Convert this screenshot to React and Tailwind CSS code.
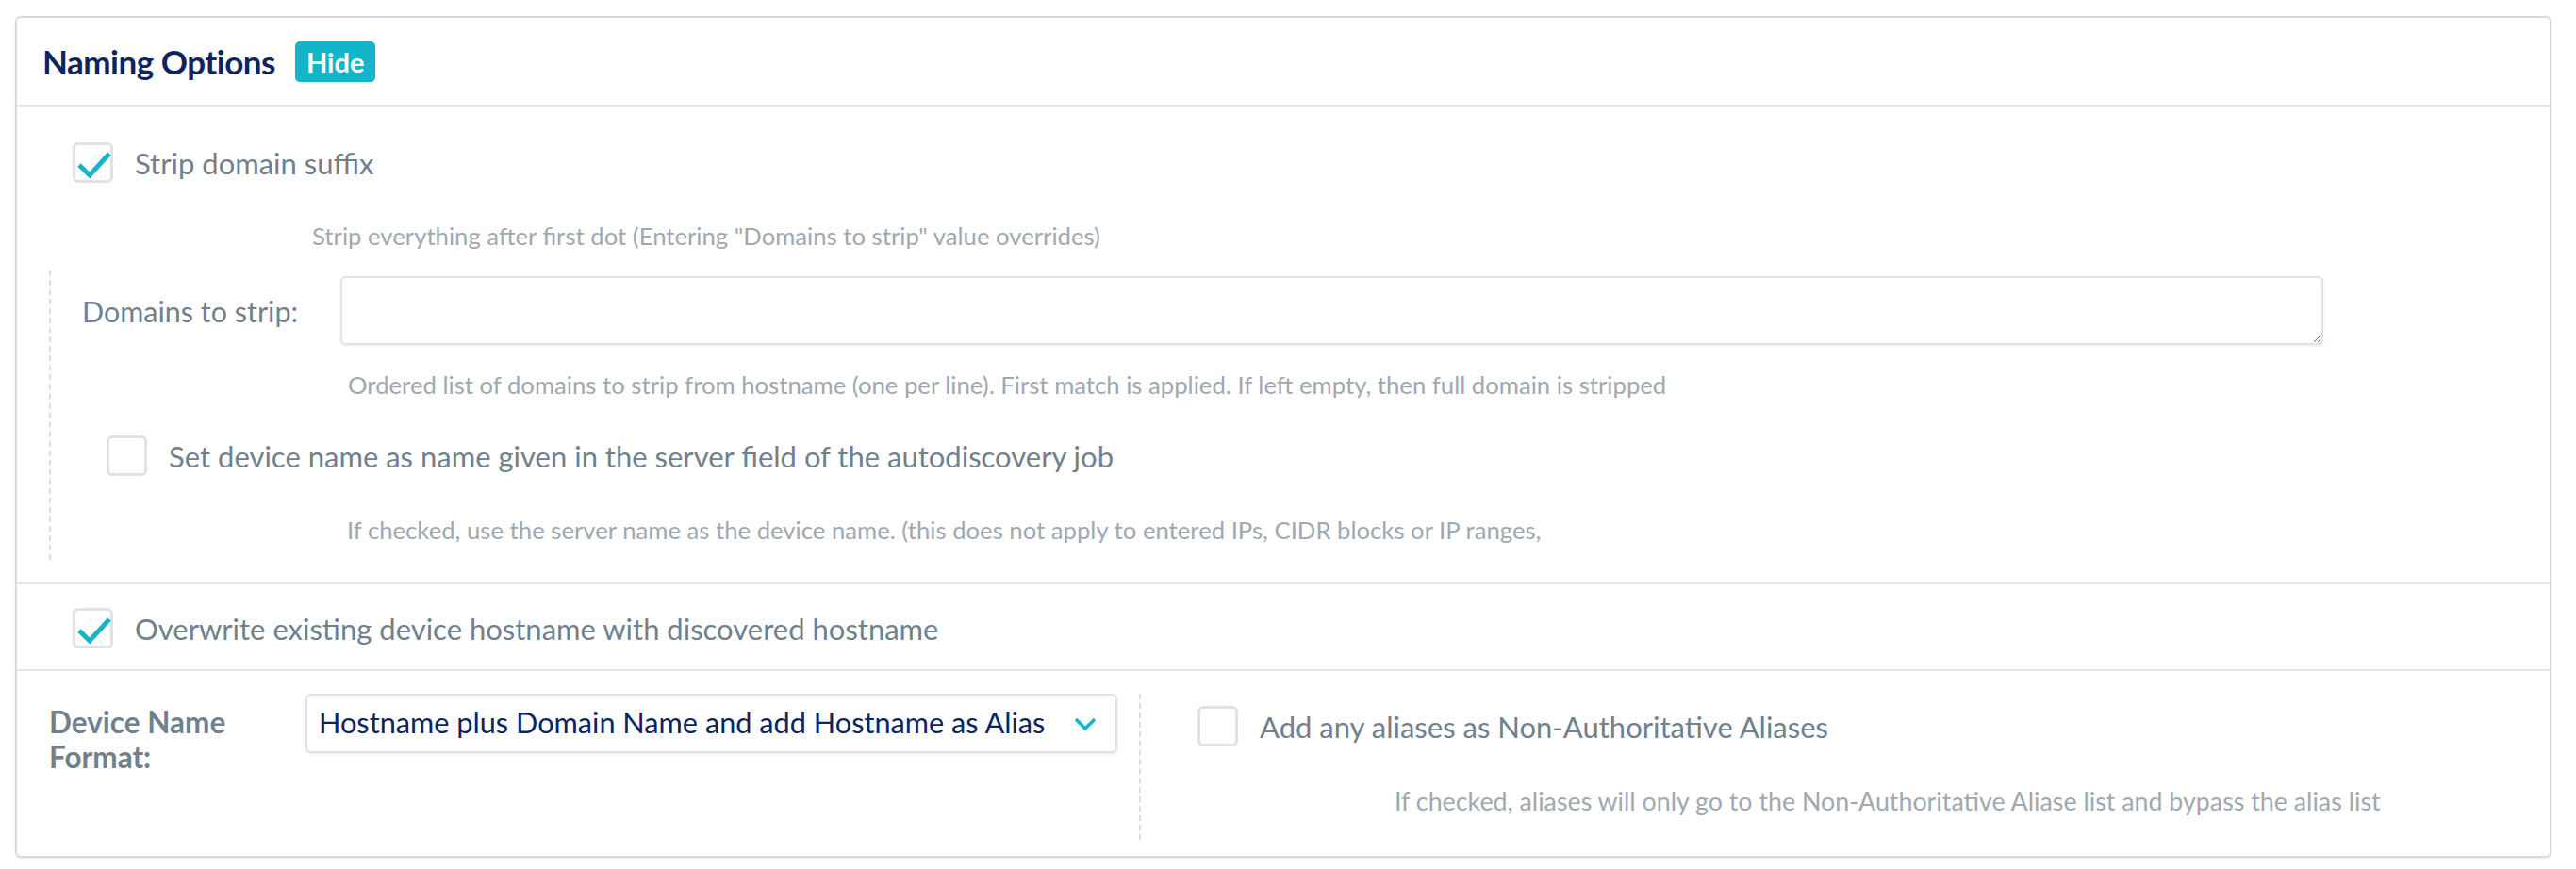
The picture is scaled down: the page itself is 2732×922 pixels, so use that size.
import React from "react";

function Check({ checked }) {
  return (
    <span className="relative flex h-[43px] w-[43px] shrink-0 rounded-[6px] border-[3px] border-[#dfe3e6] bg-white">
      {checked && (
        <svg className="absolute left-[-2px] top-[-1px]" width="43" height="43" viewBox="0 0 43 43" fill="none">
          <path d="M6 22 L17 33 L38 10" stroke="#17b3c6" strokeWidth="5" strokeLinecap="butt" />
        </svg>
      )}
    </span>
  );
}

function CheckRow({ checked, children, className = "" }) {
  return (
    <div className={"flex items-center gap-[23px] " + className}>
      <Check checked={checked} />
      <span className="text-[31px] leading-[40px] text-[#71808d]">{children}</span>
    </div>
  );
}

function Hint({ children, className = "" }) {
  return <p className={"leading-[34px] text-[#a0a8b0] " + className}>{children}</p>;
}

export default function App() {
  return (
    <div className="min-h-screen bg-white pl-[16px] pt-[17px] font-['Lato',sans-serif]">
      <div className="w-[2690px] rounded-[6px] border-2 border-[#dadada] bg-white shadow-[0_1px_3px_rgba(0,0,0,0.08)]">
        {/* header */}
        <div className="flex h-[94px] items-center gap-[21px] border-b-2 border-[#e3e6e9] px-[27px]">
          <h2 className="text-[35px] font-bold tracking-[-0.5px] text-[#0c2461]">Naming Options</h2>
          <span className="rounded-[5px] bg-[#13b5c9] px-[12px] py-[2px] text-[29px] font-bold leading-[39px] text-white">Hide</span>
        </div>

        {/* strip domain */}
        <div className="border-b-2 border-[#e3e6e9] px-[34px] pb-[24px] pt-[38px]">
          <CheckRow checked className="ml-[25px]">Strip domain suffix</CheckRow>
          <Hint className="ml-[279px] mt-[39px] text-[25.7px]">Strip everything after first dot (Entering "Domains to strip" value overrides)</Hint>
          <div className="mt-[20px] border-l-2 border-dashed border-[#dedede] pb-[15px] pt-[6px]">
            <div className="flex items-center">
              <label className="w-[307px] pl-[33px] text-[30.5px] leading-[40px] text-[#71808d]">Domains to strip:</label>
              <textarea className="h-[73px] w-[2103px] resize rounded-[6px] border-2 border-[#e2e2e2] bg-white shadow-[0_1px_3px_rgba(0,0,0,0.1)] outline-none" />
            </div>
            <Hint className="ml-[315px] mt-[25px] text-[25.7px]">Ordered list of domains to strip from hostname (one per line). First match is applied. If left empty, then full domain is stripped</Hint>
            <CheckRow className="ml-[59px] mt-[37px]">Set device name as name given in the server field of the autodiscovery job</CheckRow>
            <Hint className="ml-[314px] mt-[40px] text-[25.7px]">If checked, use the server name as the device name. (this does not apply to entered IPs, CIDR blocks or IP ranges,</Hint>
          </div>
        </div>

        {/* overwrite */}
        <div className="border-b-2 border-[#e3e6e9] px-[59px] pb-[22px] pt-[25px]">
          <CheckRow checked>Overwrite existing device hostname with discovered hostname</CheckRow>
        </div>

        {/* device name format */}
        <div className="flex px-[34px] pb-[17px] pt-[24px]">
          <div className="w-[272px] pt-[12px] text-[31.5px] font-bold leading-[37px] text-[#71808d]">
            Device Name
            <br />
            Format:
          </div>
          <div className="flex h-[63px] w-[861px] items-center justify-between rounded-[6px] border-2 border-[#e2e2e2] bg-white pl-[12px] pr-[20px] shadow-[0_1px_3px_rgba(0,0,0,0.1)]">
            <span className="text-[30.7px] text-[#0c2461]">Hostname plus Domain Name and add Hostname as Alias</span>
            <svg width="24" height="16" viewBox="0 0 24 16" fill="none">
              <path d="M2 3 L12 13 L22 3" stroke="#17b3c6" strokeWidth="3.5" />
            </svg>
          </div>
          <div className="ml-[23px] h-[155px] border-l-2 border-dashed border-[#dedede] pl-[60px] pt-[13px]">
            <CheckRow>Add any aliases as Non-Authoritative Aliases</CheckRow>
            <Hint className="ml-[209px] mt-[41px] text-[26.8px]">If checked, aliases will only go to the Non-Authoritative Aliase list and bypass the alias list</Hint>
          </div>
        </div>
      </div>
    </div>
  );
}
